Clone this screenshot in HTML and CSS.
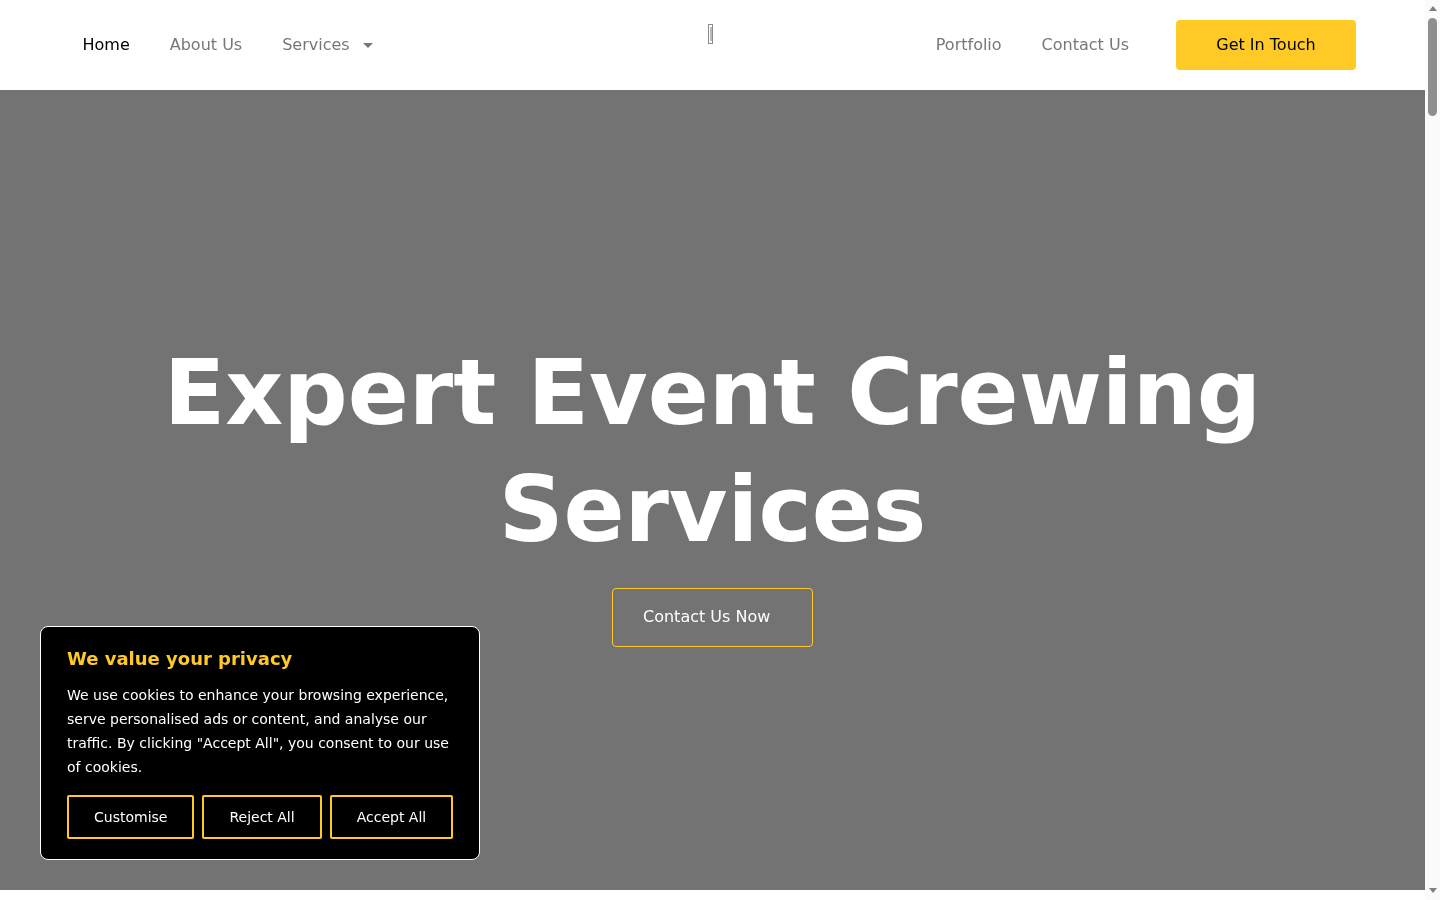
FILE: index.html
```html
<!DOCTYPE html>
<html lang="en">
<head>
<meta charset="utf-8">
<title>Expert Event Crewing Services</title>
<link rel="stylesheet" href="styles.css">
</head>
<body>
<div class="page">
  <header class="site-header">
    <nav class="nav nav-left">
      <a class="nav-link active" href="#">Home</a>
      <a class="nav-link" href="#">About Us</a>
      <a class="nav-link has-caret" href="#">Services<span class="caret"></span></a>
    </nav>
    <a class="logo" href="#" aria-label="Logo">
      <svg width="5" height="20" viewBox="0 0 5 20" fill="none">
        <rect x="0.5" y="0.5" width="4" height="19" stroke="#8a8a8a"/>
        <path d="M3 3V17" stroke="#777"/>
      </svg>
    </a>
    <nav class="nav nav-right">
      <a class="nav-link" href="#">Portfolio</a>
      <a class="nav-link" href="#">Contact Us</a>
      <a class="cta" href="#">Get In Touch</a>
    </nav>
  </header>
  <main>
    <section class="hero">
      <h1 class="hero-title">Expert Event Crewing Services</h1>
      <a class="hero-btn" href="#">Contact Us Now</a>
    </section>
  </main>
</div>
<div class="scrollbar" aria-hidden="true">
  <span class="arrow arrow-up"></span>
  <span class="thumb"></span>
  <span class="arrow arrow-down"></span>
</div>
<aside class="cookie">
  <h2 class="cookie-title">We value your privacy</h2>
  <p class="cookie-text">We use cookies to enhance your browsing experience, serve personalised ads or content, and analyse our traffic. By clicking "Accept All", you consent to our use of cookies.</p>
  <div class="cookie-actions">
    <button class="cookie-btn">Customise</button>
    <button class="cookie-btn">Reject All</button>
    <button class="cookie-btn">Accept All</button>
  </div>
</aside>
</body>
</html>
```
FILE: styles.css
```css
* { box-sizing: border-box; }
html, body { margin: 0; padding: 0; height: 100%; overflow: hidden; }
body {
  display: flex;
  font-family: "DejaVu Sans", sans-serif;
  background: #fff;
  color: #000;
  will-change: transform;
}
a { text-decoration: none; }

.page { flex: 1; min-width: 0; }

.site-header {
  height: 90px;
  padding: 0 69px 0 82.5px;
  display: grid;
  grid-template-columns: 625.5px auto 1fr;
  align-items: center;
  background: #fff;
}
.nav { display: flex; align-items: center; gap: 40px; }
.nav-right { justify-content: flex-end; }
.nav-link { font-size: 16px; line-height: 24px; color: #777; }
.nav-link.active { color: #000; }
.has-caret { display: flex; align-items: center; }
.caret {
  margin: 0 0 0 13px;
  border-left: 5px solid transparent;
  border-right: 5px solid transparent;
  border-top: 5px solid #777;
}
.logo { display: block; height: 20px; align-self: start; margin-top: 24px; line-height: 0; }
.cta {
  width: 180px;
  height: 50px;
  margin-left: 7px;
  padding-bottom: 2px;
  display: flex;
  align-items: center;
  justify-content: center;
  background: #ffc926;
  border-radius: 4px;
  color: #000;
  font-size: 16px;
}

.hero {
  height: 800px;
  padding-top: 244px;
  display: flex;
  flex-direction: column;
  align-items: center;
  background: #737373;
}
.hero-title {
  width: 1200px;
  margin: 0 0 20px;
  text-align: center;
  color: #fff;
  font-size: 90px;
  line-height: 117px;
  font-weight: 700;
}
.hero-btn {
  width: 201px;
  height: 59px;
  padding: 0 30px 2px;
  display: flex;
  align-items: center;
  border: 1px solid #ffc926;
  border-radius: 4px;
  color: #fff;
  font-size: 16px;
}

.scrollbar {
  flex: none;
  width: 15px;
  padding: 6px 3px 7px;
  display: flex;
  flex-direction: column;
  align-items: center;
  background: #fbfbfb;
}
.arrow { width: 0; height: 0; border-left: 4.5px solid transparent; border-right: 4.5px solid transparent; }
.arrow-up { border-bottom: 5px solid #7f7f7f; }
.arrow-down { margin-top: auto; border-top: 5px solid #7f7f7f; }
.thumb { width: 9px; height: 98px; margin-top: 7px; border-radius: 5px; background: #8f8f8f; }

.cookie {
  position: fixed;
  left: 40px;
  bottom: 40px;
  width: 440px;
  height: 234px;
  padding: 20px 26px;
  background: #000;
  border: 1px solid #fff;
  border-radius: 8px;
  color: #fff;
}
.cookie-title { margin: 0 0 12px; color: #ffc926; font-size: 18px; line-height: 24px; font-weight: 700; }
.cookie-text { margin: 0 0 16px; font-size: 14px; line-height: 24px; }
.cookie-actions { display: flex; gap: 8px; }
.cookie-btn {
  height: 44px;
  padding: 0 25px;
  background: #000;
  border: 2px solid #ffc926;
  border-radius: 2px;
  color: #fff;
  font-family: inherit;
  font-size: 14px;
  white-space: nowrap;
}
```
